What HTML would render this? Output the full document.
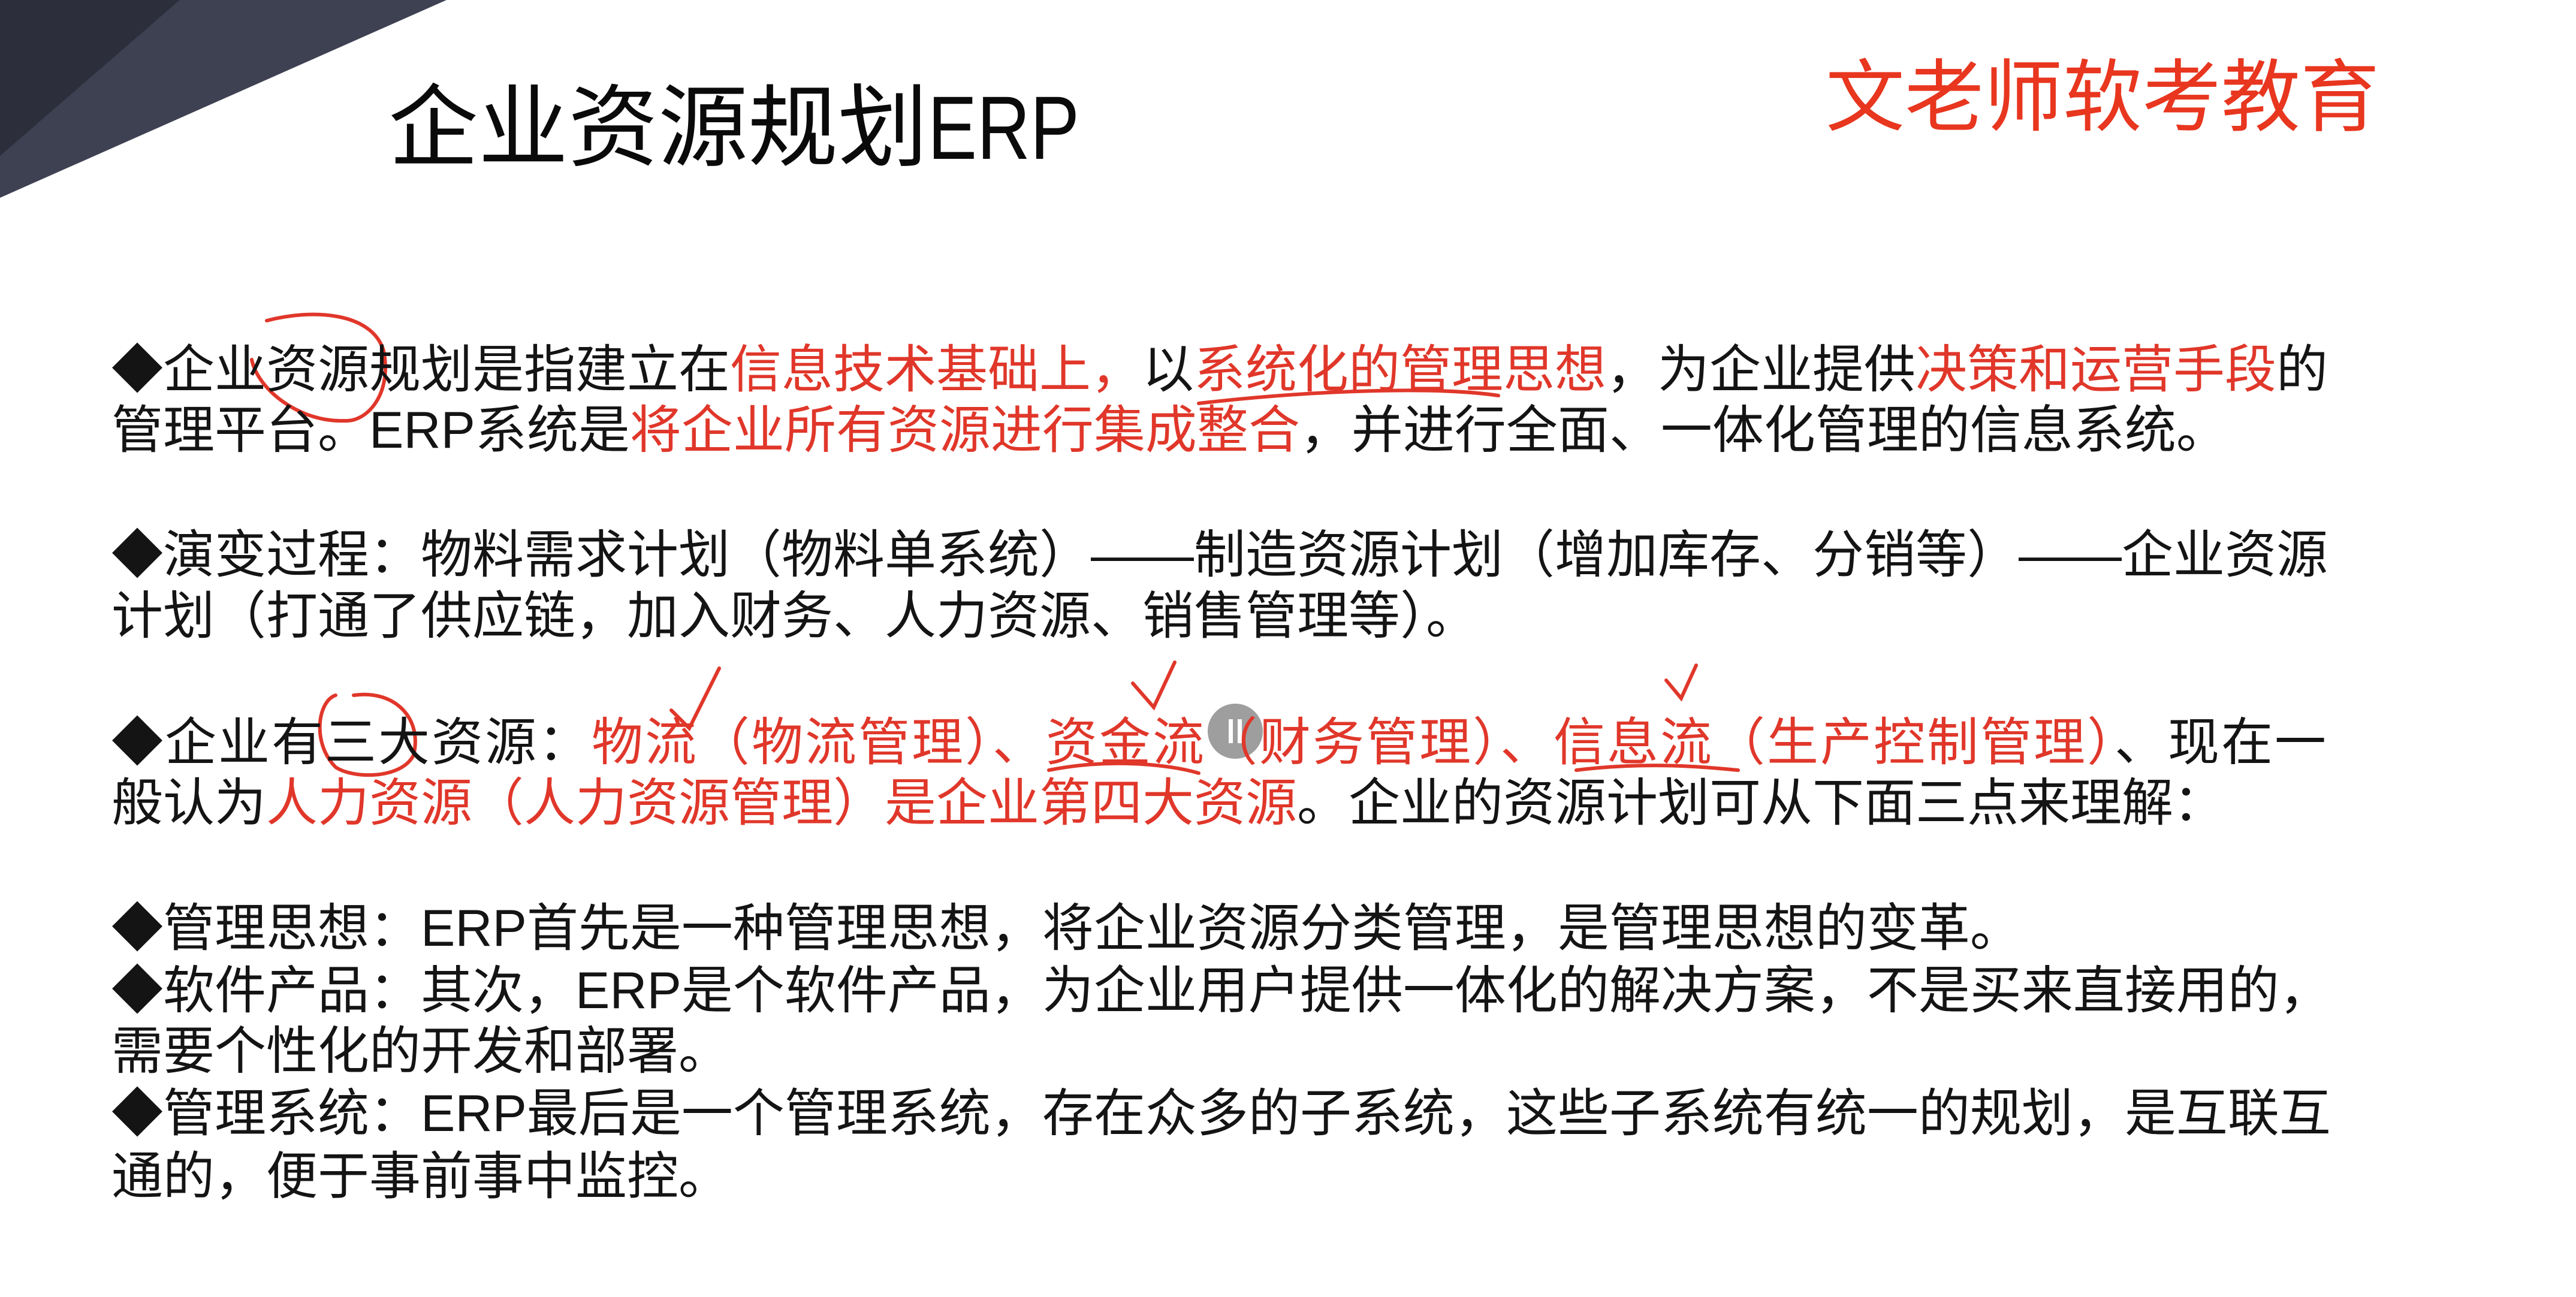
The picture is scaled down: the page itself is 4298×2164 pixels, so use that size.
<!DOCTYPE html>
<html><head><meta charset="utf-8"><style>
html,body{margin:0;padding:0}
body{width:4298px;height:2164px;position:relative;overflow:hidden;background:#fff;font-family:"Liberation Sans","Noto Sans CJK SC",sans-serif;}
.l{position:absolute;left:186px;font-size:86px;line-height:102px;color:#141414;white-space:nowrap;}
.r{color:#e0372a}
#title{position:absolute;left:648px;top:128px;font-size:150px;line-height:170px;color:#0a0a0a;white-space:nowrap}
#title .e{display:inline-block;transform:scaleX(0.82);transform-origin:left center}
#brand{position:absolute;left:3046px;top:88px;font-size:132px;line-height:150px;color:#e8361f;white-space:nowrap}
svg{position:absolute;left:0;top:0}
</style></head><body>
<svg width="4298" height="2164">
<polygon points="0,0 745,0 0,330" fill="#3e4152"/>
<polygon points="0,0 300,0 0,260" fill="#2c2e3b"/>
<g fill="none" stroke="#e0372a" stroke-width="6" stroke-linecap="round">
<path d="M445,535 C520,515 620,520 640,585 C655,660 610,705 575,702 C500,705 430,650 420,600"/>
<path d="M590,1160 C660,1150 705,1200 690,1260 C670,1300 590,1300 560,1280 C520,1240 530,1170 560,1160"/>
<path d="M2000,673 C2200,650 2400,645 2500,660"/>
<path d="M1120,1185 L1150,1215 L1200,1115"/>
<path d="M1890,1140 L1925,1180 L1960,1105"/>
<path d="M2780,1135 L2805,1165 L2830,1110"/>
<path d="M1750,1285 C1850,1265 1950,1275 2000,1290"/>
<path d="M2630,1285 C2750,1270 2850,1280 2900,1285"/>
</g>
<circle cx="2061" cy="1220" r="46" fill="#8d8d8d" opacity="0.85"/>
<rect x="2050" y="1200" width="7" height="40" fill="#fff"/><rect x="2065" y="1200" width="7" height="40" fill="#fff"/>
</svg>
<div id="title">企业资源规划<span class="e">ERP</span></div>
<div id="brand">文老师软考教育</div>
<div class="l" style="top:566px">◆企业资源规划是指建立在<span class="r">信息技术基础上，</span>以<span class="r">系统化的管理思想</span>，为企业提供<span class="r">决策和运营手段</span>的</div>
<div class="l" style="top:667px">管理平台。ERP系统是<span class="r">将企业所有资源进行集成整合</span>，并进行全面、一体化管理的信息系统。</div>
<div class="l" style="top:875px">◆演变过程：物料需求计划（物料单系统）——制造资源计划（增加库存、分销等）——企业资源</div>
<div class="l" style="top:977px">计划（打通了供应链，加入财务、人力资源、销售管理等）。</div>
<div class="l" style="top:1188px;letter-spacing:3px">◆企业有三大资源：<span class="r">物流（物流管理）、资金流（财务管理）、信息流（生产控制管理）</span>、现在一</div>
<div class="l" style="top:1289px">般认为<span class="r">人力资源（人力资源管理）是企业第四大资源</span>。企业的资源计划可从下面三点来理解：</div>
<div class="l" style="top:1498px">◆管理思想：ERP首先是一种管理思想，将企业资源分类管理，是管理思想的变革。</div>
<div class="l" style="top:1602px">◆软件产品：其次，ERP是个软件产品，为企业用户提供一体化的解决方案，不是买来直接用的，</div>
<div class="l" style="top:1703px">需要个性化的开发和部署。</div>
<div class="l" style="top:1807px">◆管理系统：ERP最后是一个管理系统，存在众多的子系统，这些子系统有统一的规划，是互联互</div>
<div class="l" style="top:1912px">通的，便于事前事中监控。</div>
</body></html>
